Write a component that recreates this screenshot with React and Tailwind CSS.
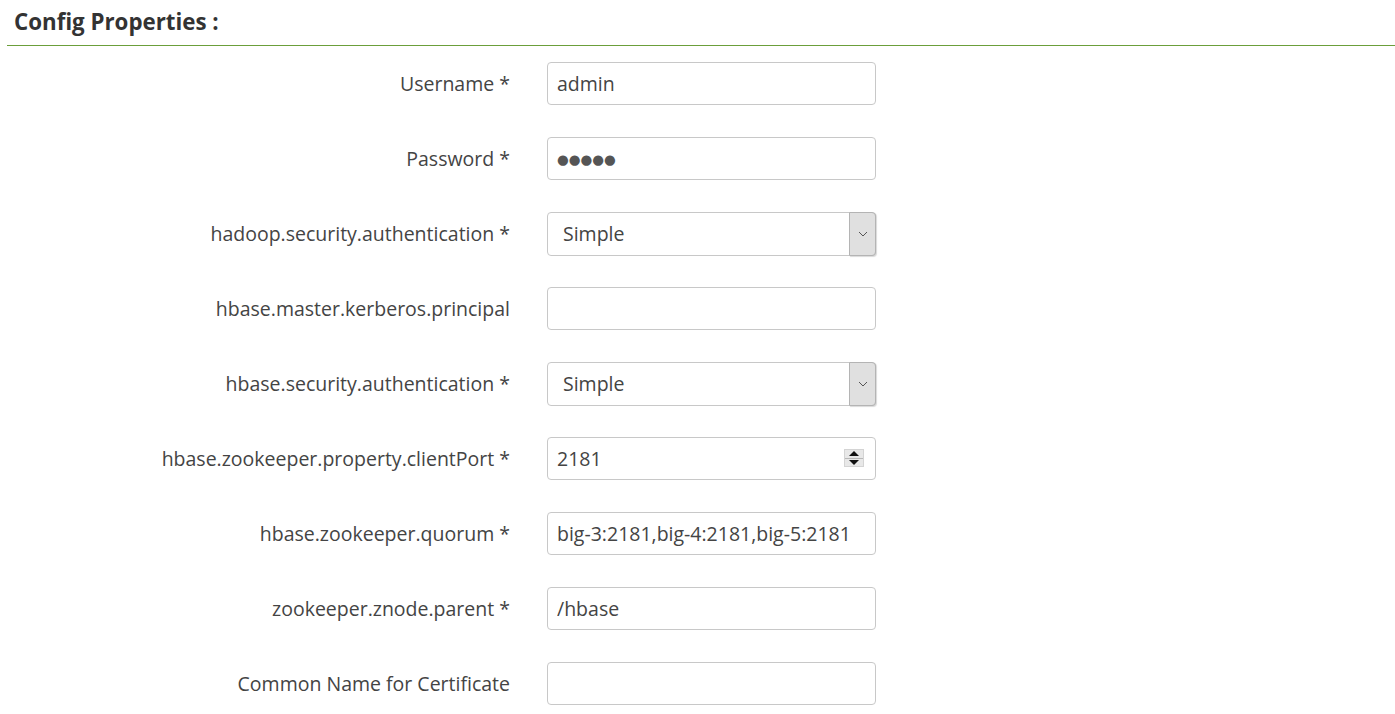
import { useState } from "react";

const fields = [
  { label: "Username *", kind: "text", value: "admin" },
  { label: "Password *", kind: "password", value: "admin" },
  { label: "hadoop.security.authentication *", kind: "select", value: "Simple" },
  { label: "hbase.master.kerberos.principal", kind: "text", value: "" },
  { label: "hbase.security.authentication *", kind: "select", value: "Simple" },
  { label: "hbase.zookeeper.property.clientPort *", kind: "number", value: "2181" },
  { label: "hbase.zookeeper.quorum *", kind: "text", value: "big-3:2181,big-4:2181,big-5:2181" },
  { label: "zookeeper.znode.parent *", kind: "text", value: "/hbase" },
  { label: "Common Name for Certificate", kind: "text", value: "" },
];

const inputCls =
  "block w-full h-[43px] rounded-[4px] border border-[#c8c8c8] bg-white px-[9px] text-[#444] outline-none";

function Field({ field }) {
  const [value, setValue] = useState(field.value);

  if (field.kind === "select") {
    return (
      <div className="relative w-[329px]">
        <select
          value={value}
          onChange={(e) => setValue(e.target.value)}
          className="block w-full h-[44px] appearance-none rounded-[4px] border border-[#c8c8c8] bg-white pl-[15px] text-[19.5px] text-[#444] outline-none"
        >
          <option>Simple</option>
          <option>Kerberos</option>
        </select>
        <div className="pointer-events-none absolute right-0 top-0 bottom-0 flex w-[27px] items-center justify-center rounded-r-[4px] border border-[#b4b4b4] bg-[#e0e0e0] shadow-[1px_1px_1px_rgba(0,0,0,0.15)]">
          <svg width="10" height="6" viewBox="0 0 10 6" fill="none">
            <path d="M1 1l4 4 4-4" stroke="#555" strokeWidth="1" />
          </svg>
        </div>
      </div>
    );
  }

  if (field.kind === "number") {
    return (
      <div className="relative w-[329px]">
        <input
          type="text"
          value={value}
          onChange={(e) => setValue(e.target.value)}
          className={`${inputCls} text-[19.5px]`}
        />
        <div className="pointer-events-none absolute right-[12px] top-[12px] flex h-[18px] w-[20px] flex-col border border-[#d4d4d4] bg-[#e8e8e8]">
          <div className="flex flex-1 items-center justify-center border-b border-[#b8b8b8]">
            <svg width="10" height="5" viewBox="0 0 10 5">
              <path d="M0 5L5 0l5 5z" fill="#111" />
            </svg>
          </div>
          <div className="flex flex-1 items-center justify-center">
            <svg width="10" height="5" viewBox="0 0 10 5">
              <path d="M0 0l5 5 5-5z" fill="#111" />
            </svg>
          </div>
        </div>
      </div>
    );
  }

  if (field.kind === "password") {
    // masked value drawn with discs, as the reference shows
    return (
      <div className="w-[329px]">
        <input
          type="text"
          readOnly
          value={"\u25CF".repeat(value.length)}
          className={`${inputCls} text-[13.5px] text-[#555]`}
          style={{ fontFamily: '"DejaVu Sans", sans-serif' }}
        />
      </div>
    );
  }

  return (
    <div className="w-[329px]">
      <input
        type={field.kind}
        value={value}
        onChange={(e) => setValue(e.target.value)}
        className={`${inputCls} text-[19.5px]`}
      />
    </div>
  );
}

export default function App() {
  return (
    <div
      className="min-h-screen bg-white pl-[7px]"
      style={{ fontFamily: '"Open Sans", "Noto Sans", sans-serif' }}
    >
      <div className="border-b border-[#6b9e3a] pt-[6px] pb-[7px] pl-[7px]">
        <h2 className="text-[22.3px] font-bold leading-[32px] text-[#333]">
          Config Properties :
        </h2>
      </div>

      <form className="mt-[16px] flex flex-col gap-[32px]">
        {fields.map((field) => (
          <div key={field.label} className="flex h-[43px] items-start">
            <label className="flex h-[43px] w-[503px] items-center justify-end text-[19.5px] text-[#444]">
              {field.label}
            </label>
            <div className="ml-[37px]">
              <Field field={field} />
            </div>
          </div>
        ))}
      </form>
    </div>
  );
}
